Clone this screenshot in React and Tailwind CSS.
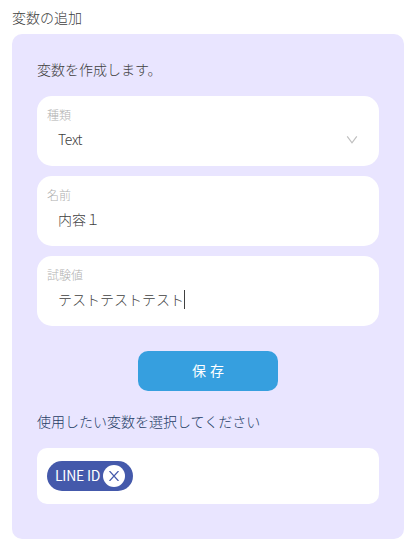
const fields = [
  { label: "種類", value: "Text", type: "select" },
  { label: "名前", value: "内容１", type: "input" },
  { label: "試験値", value: "テストテストテスト", type: "input", focused: true },
];

const tags = ["LINE ID"];

function Chevron() {
  return (
    <svg className="mt-0.5 mr-[11px] h-3 w-3 shrink-0" viewBox="0 0 12 12" fill="none" stroke="#bfbfbf" strokeWidth="1.2">
      <path d="M1.2 2.4 L6 8.8 L10.8 2.4" />
    </svg>
  );
}

function Field({ label, value, type, focused }) {
  return (
    <div className="h-[70px] rounded-[15px] bg-white px-2.5 pt-[9px]">
      <div className="h-5 text-[12px] leading-5 text-[#b0b0b0]">{label}</div>
      <div className="flex h-7 items-center justify-between pl-[11px]">
        <span className="flex items-center text-[14px] leading-5 text-[#404040]">
          {type === "select" ? <span className="tracking-[-0.4px]">{value}</span> : value}
          {focused && <span className="h-[19px] w-px bg-[#404040]" />}
        </span>
        {type === "select" && <Chevron />}
      </div>
    </div>
  );
}

function Tag({ name }) {
  return (
    <span className="flex h-[30px] w-[86px] items-center justify-between rounded-full bg-[#4459ab] pr-2 pl-2 text-[14px] font-normal whitespace-nowrap text-white">
      <span className="-mt-px tracking-[-0.25px]">{name}</span>
      <button className="flex h-[22px] w-[22px] shrink-0 items-center justify-center rounded-full bg-white">
        <svg className="h-2.5 w-2.5" viewBox="0 0 10 10" fill="none" stroke="#4459ab" strokeWidth="1.2">
          <path d="M0.5 0 L9.5 10 M9.5 0 L0.5 10" />
        </svg>
      </button>
    </span>
  );
}

export default function App() {
  return (
    <div className="h-[548px] w-[418px] bg-white px-3 pt-1.5 font-['Noto_Sans_CJK_JP',sans-serif] text-[14px] font-light text-[#404040]">
      <h1 className="h-7 leading-[22px] font-light">変数の追加</h1>
      <section className="h-[505px] w-[392px] rounded-[10px] bg-[#e9e5ff] px-[25px] pt-6">
        <p className="h-[38px] leading-[22px]">変数を作成します。</p>
        <div className="flex flex-col gap-2.5">
          {fields.map((field) => (
            <Field key={field.label} {...field} />
          ))}
        </div>
        <button className="mx-auto mt-[25px] flex h-10 w-[140px] items-center justify-center gap-1 rounded-[10px] bg-[#369fdf] pb-0.5 font-normal text-white">
          <span>保</span>
          <span>存</span>
        </button>
        <p className="mt-[19px] h-[38px] leading-[22px] text-[#1f3d66]">使用したい変数を選択してください</p>
        <div className="flex h-14 items-start rounded-[10px] bg-white px-2.5 pt-[13px]">
          {tags.map((tag) => (
            <Tag key={tag} name={tag} />
          ))}
        </div>
      </section>
    </div>
  );
}
